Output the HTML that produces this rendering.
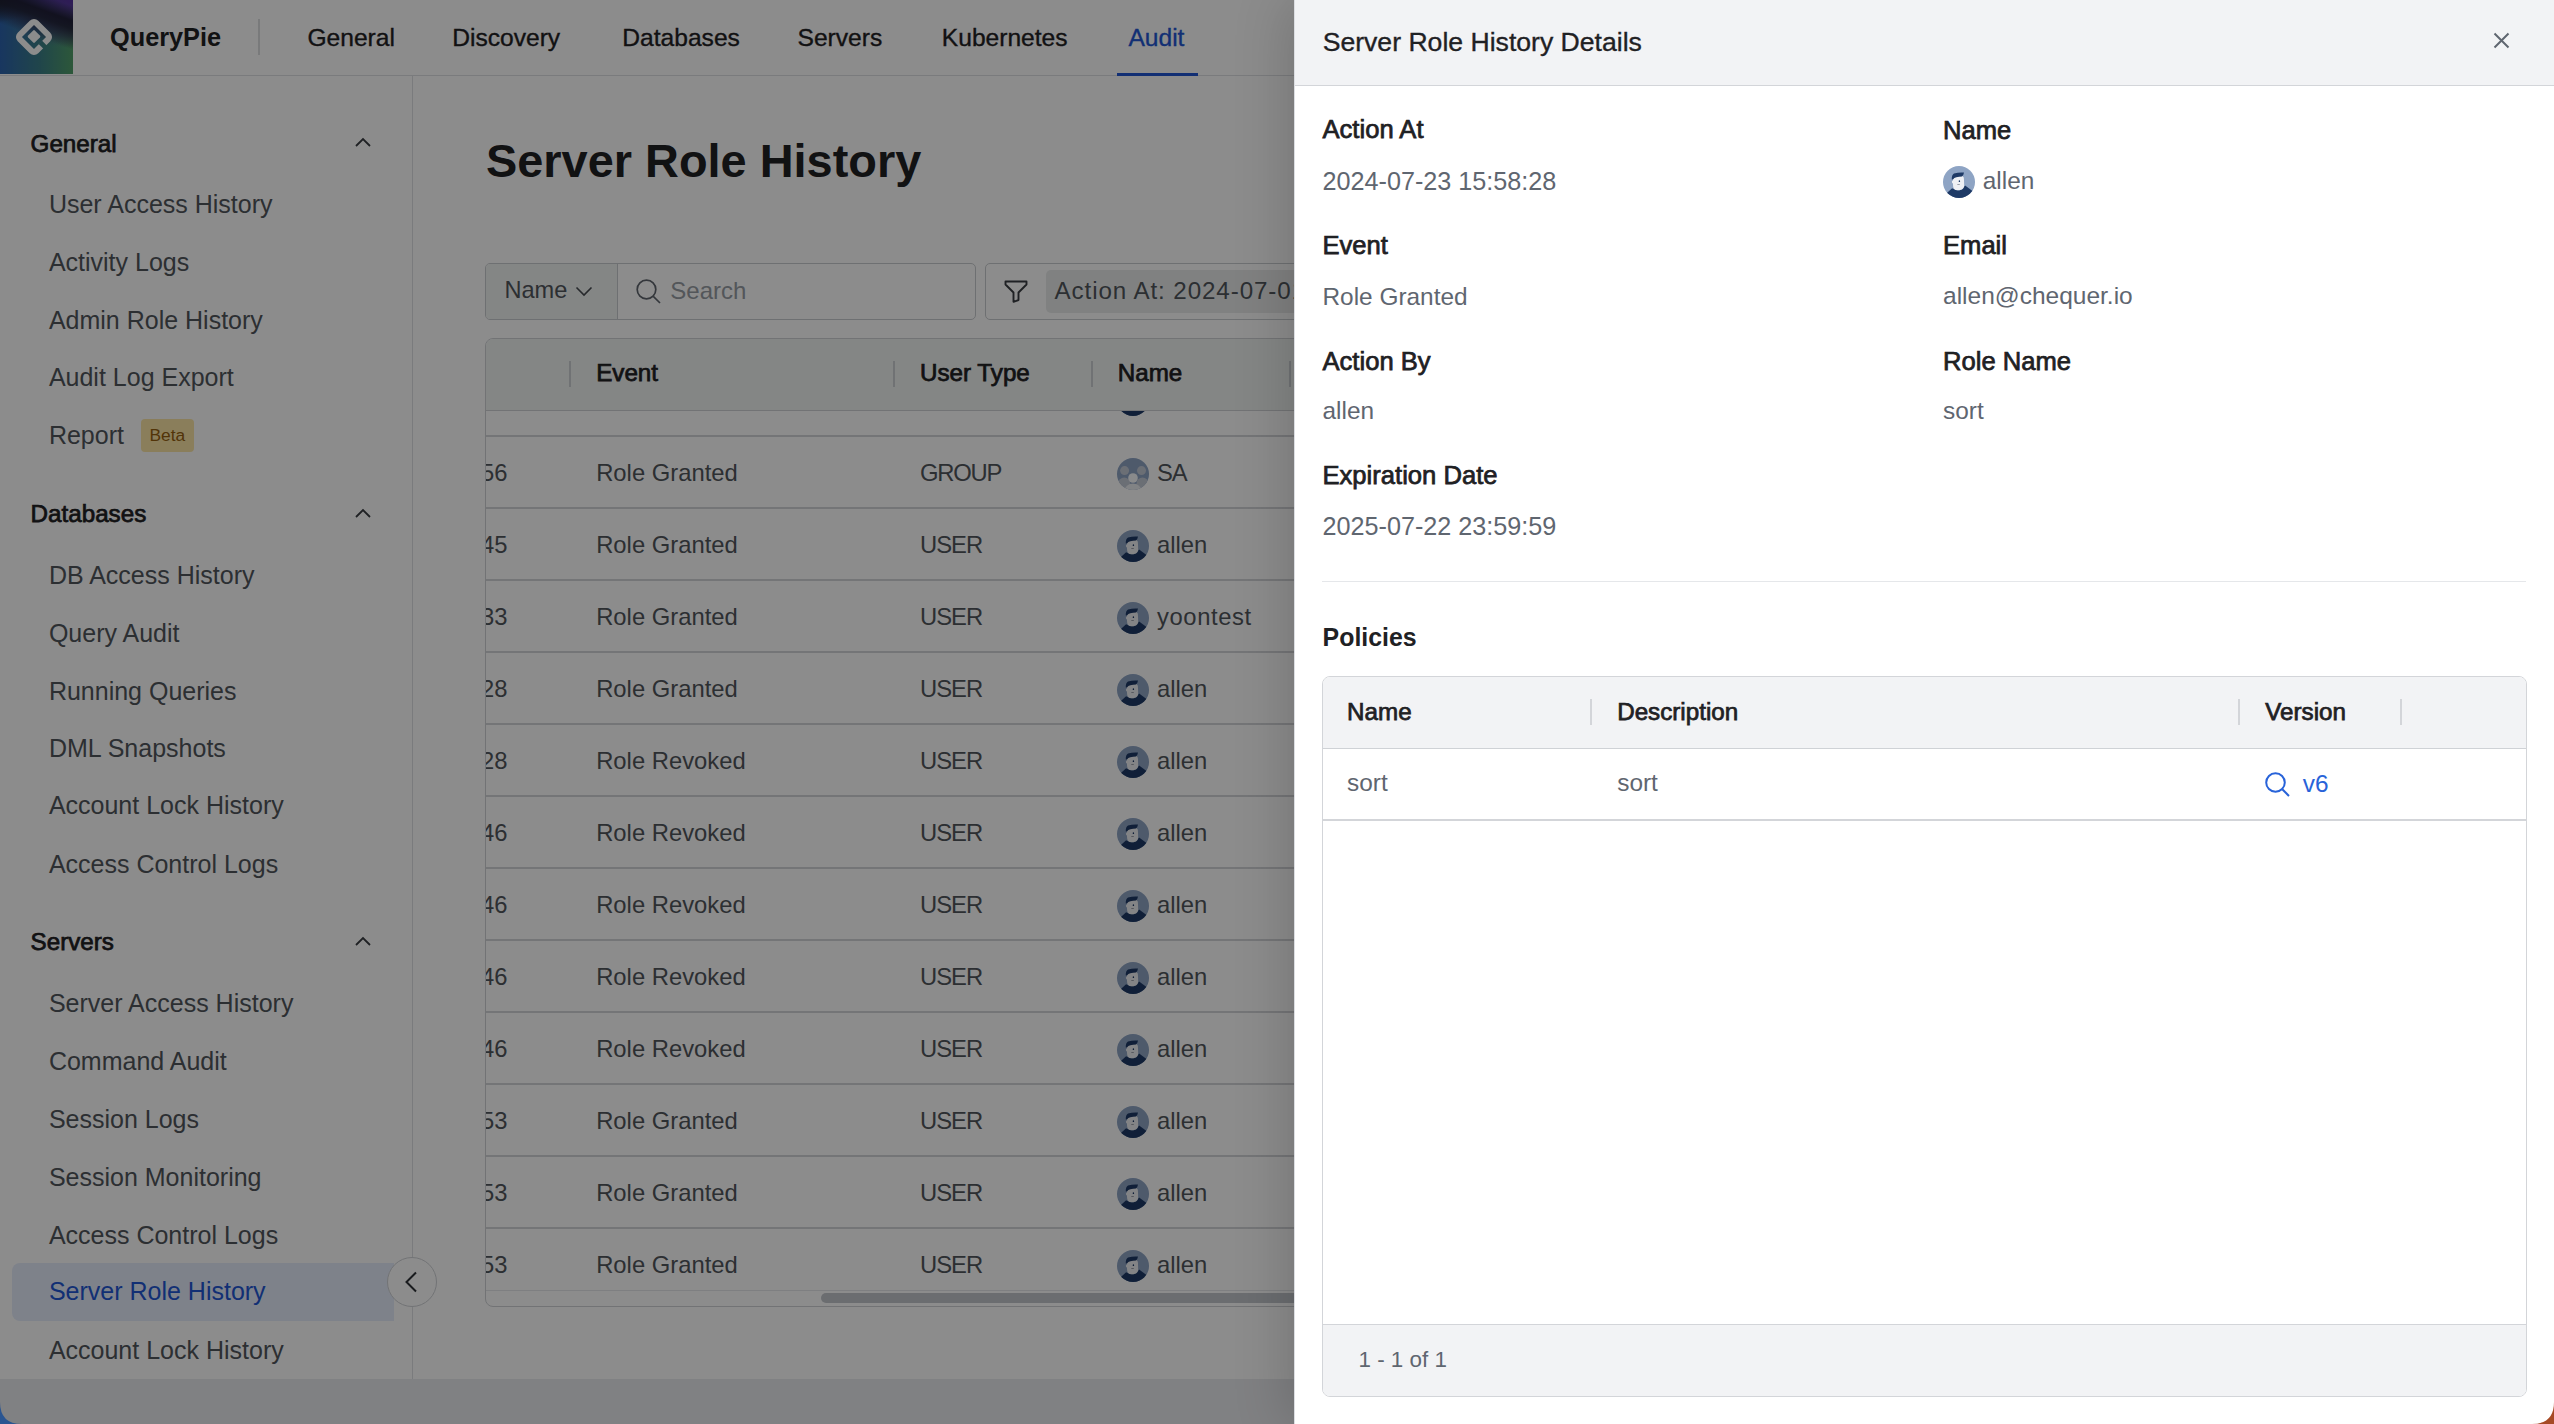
<!DOCTYPE html>
<html><head><meta charset="utf-8">
<style>
*{margin:0;padding:0;box-sizing:border-box}
html,body{width:2554px;height:1424px;overflow:hidden;background:#fff;font-family:"Liberation Sans",sans-serif}
.a{position:absolute}
.t{position:absolute;white-space:nowrap;line-height:1}
svg{position:absolute;overflow:visible}
.md{-webkit-text-stroke:0.35px currentColor}
.sb{-webkit-text-stroke:0.75px currentColor}
.c1{color:#1f2124}
.c2{color:#51565c}
.c3{color:#5f6670}
.bl{color:#2257d4}
</style></head><body>
<svg width="0" height="0" style="position:absolute">
<defs>
<clipPath id="cc"><circle cx="16" cy="16" r="16"/></clipPath>
<symbol id="av" viewBox="0 0 32 32">
<g clip-path="url(#cc)">
<rect width="32" height="32" fill="#8ea4c4"/>
<path d="M3.9 26.9 L9.1 22.3 Q13 24.5 16.5 24.5 Q20 23 22.1 19.5 L29.2 24.8 L32 32 L0 32 Z" fill="#1e3a66"/>
<path d="M9.7 13 Q9.5 11 11 10.5 L19.5 10 Q21.3 11 21 14 L21.2 20 Q21 22 19 23.5 Q16 24.5 12.5 24 Q10.5 23 10.2 21 L9.9 17.5 Q8.7 17 8.9 15.5 Q9.2 14.6 9.8 14.7 Z" fill="#eef0f4"/>
<path d="M8.8 13.6 Q8.5 9 11 7.5 Q16 6 21 6.5 Q20.5 9.5 19 10.6 Q16 11 13.4 11.2 Q11 11.6 10 13.6 Z" fill="#1e3a66"/>
<ellipse cx="16.4" cy="15.2" rx="0.7" ry="0.9" fill="#1e3a66"/>
<rect x="14.3" y="18.2" width="2.5" height="0.8" fill="#8a8f99"/>
</g>
</symbol>
<symbol id="gav" viewBox="0 0 32 32">
<g clip-path="url(#cc)">
<rect width="32" height="32" fill="#8ea4c4"/>
<circle cx="7.2" cy="25.5" r="6" fill="#c4cad6"/>
<circle cx="25.5" cy="25.5" r="6" fill="#c4cad6"/>
<circle cx="7.6" cy="12.6" r="4.5" fill="#c4cad6"/>
<circle cx="24.5" cy="12.6" r="4.5" fill="#c4cad6"/>
<ellipse cx="16" cy="33" rx="8.5" ry="7.5" fill="#eceef3"/>
<circle cx="16" cy="20" r="4.8" fill="#fafbfd"/>
</g>
</symbol>
</defs></svg>
<div class="a" style="left:0;top:0;width:2554px;height:1424px;overflow:hidden;background:#fff">
<div class="a" style="left:0px;top:0px;width:73px;height:74px;background:linear-gradient(200deg,rgba(30,30,50,0) 6%,rgba(30,30,52,0.95) 21%,rgba(30,32,48,0.85) 29%,rgba(30,40,50,0) 50%),radial-gradient(75px 48px at 100% 0%,#55309f 0%,rgba(85,48,159,0.75) 40%,rgba(85,48,159,0) 100%),linear-gradient(165deg,#1f2233 0%,rgba(31,34,51,0) 25%),linear-gradient(90deg,#2d63ae 0%,#3b7f88 55%,#52a06a 100%);"></div>
<svg style="left:0;top:0" width="73" height="74" viewBox="0 0 73 74">
<defs><mask id="lg"><rect width="73" height="74" fill="#fff"/><rect x="-7" y="-2.3" width="14" height="4.6" fill="#000" transform="translate(45.2 47.2) rotate(45)"/></mask></defs>
<g mask="url(#lg)"><rect x="-11.5" y="-11.5" width="23" height="23" rx="3" fill="none" stroke="#fff" stroke-width="6" transform="translate(34 37) rotate(45)"/></g>
<rect x="-4.9" y="-4.9" width="9.8" height="9.8" rx="1.5" fill="#fff" transform="translate(34 36.5) rotate(45)"/>
</svg>
<div class="t c1" style="left:110.0px;top:24.8px;font-size:25.3px;font-weight:bold;">QueryPie</div>
<div class="a" style="left:258px;top:19px;width:2px;height:36px;background:#dcdee1"></div>
<div class="t c1 md" style="left:307.4px;top:26.3px;font-size:24.6px;">General</div>
<div class="t c1 md" style="left:452.2px;top:26.3px;font-size:24.6px;">Discovery</div>
<div class="t c1 md" style="left:622.3px;top:26.3px;font-size:24.6px;">Databases</div>
<div class="t c1 md" style="left:797.5px;top:26.3px;font-size:24.6px;">Servers</div>
<div class="t c1 md" style="left:941.8px;top:26.3px;font-size:24.6px;">Kubernetes</div>
<div class="t bl md" style="left:1128.4px;top:26.3px;font-size:24.6px;">Audit</div>
<div class="a" style="left:0px;top:75px;width:2554px;height:1px;background:#dfe1e4"></div>
<div class="a" style="left:1117px;top:73px;width:81px;height:3px;background:#2257d4"></div>
<div class="a" style="left:412px;top:76px;width:1px;height:1303px;background:#dfe1e4"></div>
<div class="t c1 sb" style="left:30.6px;top:131.5px;font-size:24.2px;">General</div>
<svg style="left:355px;top:138px" width="16" height="9" viewBox="0 0 16 9"><path d="M1 8 L8 1 L15 8" fill="none" stroke="#3a3d42" stroke-width="1.8"/></svg>
<div class="t c2" style="left:48.9px;top:192.2px;font-size:25px;">User Access History</div>
<div class="t c2" style="left:48.9px;top:249.9px;font-size:25px;">Activity Logs</div>
<div class="t c2" style="left:48.9px;top:307.6px;font-size:25px;">Admin Role History</div>
<div class="t c2" style="left:48.9px;top:365.2px;font-size:25px;">Audit Log Export</div>
<div class="t c2" style="left:48.9px;top:422.9px;font-size:25px;">Report</div>
<div class="a" style="left:141px;top:419px;width:53px;height:33px;background:#fbe6a6;border-radius:4px"></div>
<div class="t " style="left:149.5px;top:427.0px;font-size:17.4px;color:#95600f">Beta</div>
<div class="t c1 sb" style="left:30.6px;top:502.3px;font-size:24.2px;">Databases</div>
<svg style="left:355px;top:509px" width="16" height="9" viewBox="0 0 16 9"><path d="M1 8 L8 1 L15 8" fill="none" stroke="#3a3d42" stroke-width="1.8"/></svg>
<div class="t c2" style="left:48.9px;top:563.0px;font-size:25px;">DB Access History</div>
<div class="t c2" style="left:48.9px;top:621.2px;font-size:25px;">Query Audit</div>
<div class="t c2" style="left:48.9px;top:678.8px;font-size:25px;">Running Queries</div>
<div class="t c2" style="left:48.9px;top:735.8px;font-size:25px;">DML Snapshots</div>
<div class="t c2" style="left:48.9px;top:793.1px;font-size:25px;">Account Lock History</div>
<div class="t c2" style="left:48.9px;top:851.5px;font-size:25px;">Access Control Logs</div>
<div class="t c1 sb" style="left:30.6px;top:930.4px;font-size:24.2px;">Servers</div>
<svg style="left:355px;top:937px" width="16" height="9" viewBox="0 0 16 9"><path d="M1 8 L8 1 L15 8" fill="none" stroke="#3a3d42" stroke-width="1.8"/></svg>
<div class="a" style="left:12px;top:1263px;width:382px;height:58px;background:#e6edfc;border-radius:8px 0 0 8px"></div>
<div class="t c2" style="left:48.9px;top:991.2px;font-size:25px;">Server Access History</div>
<div class="t c2" style="left:48.9px;top:1048.8px;font-size:25px;">Command Audit</div>
<div class="t c2" style="left:48.9px;top:1107.1px;font-size:25px;">Session Logs</div>
<div class="t c2" style="left:48.9px;top:1164.5px;font-size:25px;">Session Monitoring</div>
<div class="t c2" style="left:48.9px;top:1222.5px;font-size:25px;">Access Control Logs</div>
<div class="t bl" style="left:48.9px;top:1278.8px;font-size:25px;">Server Role History</div>
<div class="t c2" style="left:48.9px;top:1338.2px;font-size:25px;">Account Lock History</div>
<div class="a" style="left:387px;top:1257px;width:50px;height:50px;background:#fff;border:1px solid #cfd2d6;border-radius:50%"></div>
<svg style="left:404px;top:1271px" width="14" height="22" viewBox="0 0 14 22"><path d="M12 1.5 L2.5 11 L12 20.5" fill="none" stroke="#2f3237" stroke-width="2"/></svg>
<div class="t c1" style="left:486.0px;top:138.1px;font-size:46.9px;font-weight:bold;">Server Role History</div>
<div class="a" style="left:485px;top:263px;width:491px;height:57px;border:1px solid #c9ccd0;border-radius:5px;background:#fff"></div>
<div class="a" style="left:486px;top:264px;width:131px;height:55px;background:#f1f4f3;border-radius:4px 0 0 4px"></div>
<div class="a" style="left:617px;top:264px;width:1px;height:55px;background:#c9ccd0"></div>
<div class="t c2" style="left:504.4px;top:279.2px;font-size:23.6px;">Name</div>
<svg style="left:575px;top:286px" width="18" height="11" viewBox="0 0 18 11"><path d="M1.5 1.5 L9 9 L16.5 1.5" fill="none" stroke="#474b51" stroke-width="1.6"/></svg>
<svg style="left:636px;top:279px" width="25" height="25" viewBox="0 0 25 25"><circle cx="10.5" cy="10.5" r="9.3" fill="none" stroke="#5f656d" stroke-width="1.7"/><path d="M17.3 17.3 L24 24" stroke="#5f656d" stroke-width="1.7"/></svg>
<div class="t " style="left:670.3px;top:278.9px;font-size:24px;color:#979da4">Search</div>
<div class="a" style="left:985px;top:263px;width:600px;height:57px;border:1px solid #c9ccd0;border-radius:5px;background:#fff"></div>
<svg style="left:1004px;top:280px" width="24" height="23" viewBox="0 0 24 23"><path d="M1.5 1.5 H22.5 V4.5 L14.5 12.5 V20 L9.5 21.8 V12.5 L1.5 4.5 Z" fill="none" stroke="#3a3d42" stroke-width="1.9" stroke-linejoin="round"/></svg>
<div class="a" style="left:1046px;top:270px;width:400px;height:43px;background:#e9ecec;border-radius:5px"></div>
<div class="t c2" style="left:1054.5px;top:279.3px;font-size:24.2px;letter-spacing:0.9px">Action At: 2024-07-01 ~ 2024-07-31</div>
<div class="a" style="left:485px;top:338px;width:1000px;height:969px;border:1px solid #cfd2d6;border-radius:8px;background:#fff;overflow:hidden"></div>
<div class="a" style="left:486px;top:339px;width:999px;height:71px;background:#f1f4f3;border-radius:7px 0 0 0"></div>
<div class="a" style="left:486px;top:410px;width:999px;height:1px;background:#cfd2d6"></div>
<div class="a" style="left:569px;top:361px;width:2px;height:26px;background:#cdd0d4"></div>
<div class="a" style="left:893px;top:361px;width:2px;height:26px;background:#cdd0d4"></div>
<div class="a" style="left:1091px;top:361px;width:2px;height:26px;background:#cdd0d4"></div>
<div class="a" style="left:1289px;top:361px;width:2px;height:26px;background:#cdd0d4"></div>
<div class="t c1 sb" style="left:596.2px;top:361.4px;font-size:24.2px;">Event</div>
<div class="t c1 sb" style="left:920.0px;top:361.4px;font-size:24.2px;">User Type</div>
<div class="t c1 sb" style="left:1117.8px;top:361.4px;font-size:24.2px;">Name</div>
<div class="a" style="left:486px;top:411px;width:999px;height:880px;overflow:hidden">
<svg style="left:631px;top:-27px" width="32" height="32"><use href="#av"/></svg>
<div class="a" style="left:0px;top:24px;width:999px;height:2px;background:#d3d5d9"></div>
<div class="t c2" style="right:977.5px;top:49.8px;font-size:23.8px">2024-07-23 15:49:56</div>
<div class="t c2" style="left:110.2px;top:49.8px;font-size:23.8px;">Role Granted</div>
<div class="t c2" style="left:434.0px;top:49.8px;font-size:23.8px;letter-spacing:-1.2px">GROUP</div>
<svg style="left:631px;top:46.5px" width="32" height="32"><use href="#gav"/></svg>
<div class="t c2" style="left:671.0px;top:49.8px;font-size:23.8px;letter-spacing:-1px">SA</div>
<div class="a" style="left:0px;top:96px;width:999px;height:2px;background:#d3d5d9"></div>
<div class="t c2" style="right:977.5px;top:121.8px;font-size:23.8px">2024-07-23 15:45:45</div>
<div class="t c2" style="left:110.2px;top:121.8px;font-size:23.8px;">Role Granted</div>
<div class="t c2" style="left:434.0px;top:121.8px;font-size:23.8px;letter-spacing:-1px">USER</div>
<svg style="left:631px;top:118.5px" width="32" height="32"><use href="#av"/></svg>
<div class="t c2" style="left:671.0px;top:121.8px;font-size:23.8px;">allen</div>
<div class="a" style="left:0px;top:168px;width:999px;height:2px;background:#d3d5d9"></div>
<div class="t c2" style="right:977.5px;top:193.8px;font-size:23.8px">2024-07-23 15:40:33</div>
<div class="t c2" style="left:110.2px;top:193.8px;font-size:23.8px;">Role Granted</div>
<div class="t c2" style="left:434.0px;top:193.8px;font-size:23.8px;letter-spacing:-1px">USER</div>
<svg style="left:631px;top:190.5px" width="32" height="32"><use href="#av"/></svg>
<div class="t c2" style="left:671.0px;top:193.8px;font-size:23.8px;letter-spacing:0.6px">yoontest</div>
<div class="a" style="left:0px;top:240px;width:999px;height:2px;background:#d3d5d9"></div>
<div class="t c2" style="right:977.5px;top:265.8px;font-size:23.8px">2024-07-23 15:38:28</div>
<div class="t c2" style="left:110.2px;top:265.8px;font-size:23.8px;">Role Granted</div>
<div class="t c2" style="left:434.0px;top:265.8px;font-size:23.8px;letter-spacing:-1px">USER</div>
<svg style="left:631px;top:262.5px" width="32" height="32"><use href="#av"/></svg>
<div class="t c2" style="left:671.0px;top:265.8px;font-size:23.8px;">allen</div>
<div class="a" style="left:0px;top:312px;width:999px;height:2px;background:#d3d5d9"></div>
<div class="t c2" style="right:977.5px;top:337.8px;font-size:23.8px">2024-07-23 15:37:28</div>
<div class="t c2" style="left:110.2px;top:337.8px;font-size:23.8px;">Role Revoked</div>
<div class="t c2" style="left:434.0px;top:337.8px;font-size:23.8px;letter-spacing:-1px">USER</div>
<svg style="left:631px;top:334.5px" width="32" height="32"><use href="#av"/></svg>
<div class="t c2" style="left:671.0px;top:337.8px;font-size:23.8px;">allen</div>
<div class="a" style="left:0px;top:384px;width:999px;height:2px;background:#d3d5d9"></div>
<div class="t c2" style="right:977.5px;top:409.8px;font-size:23.8px">2024-07-23 15:36:46</div>
<div class="t c2" style="left:110.2px;top:409.8px;font-size:23.8px;">Role Revoked</div>
<div class="t c2" style="left:434.0px;top:409.8px;font-size:23.8px;letter-spacing:-1px">USER</div>
<svg style="left:631px;top:406.5px" width="32" height="32"><use href="#av"/></svg>
<div class="t c2" style="left:671.0px;top:409.8px;font-size:23.8px;">allen</div>
<div class="a" style="left:0px;top:456px;width:999px;height:2px;background:#d3d5d9"></div>
<div class="t c2" style="right:977.5px;top:481.8px;font-size:23.8px">2024-07-23 15:35:46</div>
<div class="t c2" style="left:110.2px;top:481.8px;font-size:23.8px;">Role Revoked</div>
<div class="t c2" style="left:434.0px;top:481.8px;font-size:23.8px;letter-spacing:-1px">USER</div>
<svg style="left:631px;top:478.5px" width="32" height="32"><use href="#av"/></svg>
<div class="t c2" style="left:671.0px;top:481.8px;font-size:23.8px;">allen</div>
<div class="a" style="left:0px;top:528px;width:999px;height:2px;background:#d3d5d9"></div>
<div class="t c2" style="right:977.5px;top:553.8px;font-size:23.8px">2024-07-23 15:34:46</div>
<div class="t c2" style="left:110.2px;top:553.8px;font-size:23.8px;">Role Revoked</div>
<div class="t c2" style="left:434.0px;top:553.8px;font-size:23.8px;letter-spacing:-1px">USER</div>
<svg style="left:631px;top:550.5px" width="32" height="32"><use href="#av"/></svg>
<div class="t c2" style="left:671.0px;top:553.8px;font-size:23.8px;">allen</div>
<div class="a" style="left:0px;top:600px;width:999px;height:2px;background:#d3d5d9"></div>
<div class="t c2" style="right:977.5px;top:625.8px;font-size:23.8px">2024-07-23 15:33:46</div>
<div class="t c2" style="left:110.2px;top:625.8px;font-size:23.8px;">Role Revoked</div>
<div class="t c2" style="left:434.0px;top:625.8px;font-size:23.8px;letter-spacing:-1px">USER</div>
<svg style="left:631px;top:622.5px" width="32" height="32"><use href="#av"/></svg>
<div class="t c2" style="left:671.0px;top:625.8px;font-size:23.8px;">allen</div>
<div class="a" style="left:0px;top:672px;width:999px;height:2px;background:#d3d5d9"></div>
<div class="t c2" style="right:977.5px;top:697.8px;font-size:23.8px">2024-07-23 15:30:53</div>
<div class="t c2" style="left:110.2px;top:697.8px;font-size:23.8px;">Role Granted</div>
<div class="t c2" style="left:434.0px;top:697.8px;font-size:23.8px;letter-spacing:-1px">USER</div>
<svg style="left:631px;top:694.5px" width="32" height="32"><use href="#av"/></svg>
<div class="t c2" style="left:671.0px;top:697.8px;font-size:23.8px;">allen</div>
<div class="a" style="left:0px;top:744px;width:999px;height:2px;background:#d3d5d9"></div>
<div class="t c2" style="right:977.5px;top:769.8px;font-size:23.8px">2024-07-23 15:29:53</div>
<div class="t c2" style="left:110.2px;top:769.8px;font-size:23.8px;">Role Granted</div>
<div class="t c2" style="left:434.0px;top:769.8px;font-size:23.8px;letter-spacing:-1px">USER</div>
<svg style="left:631px;top:766.5px" width="32" height="32"><use href="#av"/></svg>
<div class="t c2" style="left:671.0px;top:769.8px;font-size:23.8px;">allen</div>
<div class="a" style="left:0px;top:816px;width:999px;height:2px;background:#d3d5d9"></div>
<div class="t c2" style="right:977.5px;top:841.8px;font-size:23.8px">2024-07-23 15:28:53</div>
<div class="t c2" style="left:110.2px;top:841.8px;font-size:23.8px;">Role Granted</div>
<div class="t c2" style="left:434.0px;top:841.8px;font-size:23.8px;letter-spacing:-1px">USER</div>
<svg style="left:631px;top:838.5px" width="32" height="32"><use href="#av"/></svg>
<div class="t c2" style="left:671.0px;top:841.8px;font-size:23.8px;">allen</div>
<div class="a" style="left:0px;top:888px;width:999px;height:2px;background:#d3d5d9"></div>
</div>
<div class="a" style="left:486px;top:1290px;width:999px;height:1px;background:#e6e8eb"></div>
<div class="a" style="left:821px;top:1293px;width:600px;height:10px;background:#c3c7cc;border-radius:5px"></div>
<div class="a" style="left:0px;top:1379px;width:2554px;height:45px;background:#e9ebef"></div>
</div>
<div class="a" style="left:0px;top:0px;width:2554px;height:1424px;background:rgba(0,0,0,0.45)"></div>
<div class="a" style="left:1294px;top:0px;width:1260px;height:1424px;background:#fff;box-shadow:-8px 0 50px rgba(0,0,0,0.16)"></div>
<div class="a" style="left:1294px;top:0px;width:1px;height:1424px;background:#dcdee2"></div>
<div class="a" style="left:1295px;top:0px;width:1259px;height:85px;background:#f2f3f5"></div>
<div class="a" style="left:1295px;top:85px;width:1259px;height:1px;background:#d3d5d9"></div>
<div class="t c1 md" style="left:1322.7px;top:28.6px;font-size:26.6px;">Server Role History Details</div>
<svg style="left:2493px;top:32px" width="17" height="17" viewBox="0 0 17 17"><path d="M1.5 1.5 L15.5 15.5 M15.5 1.5 L1.5 15.5" stroke="#5f6670" stroke-width="2"/></svg>
<div class="t c1 sb" style="left:1322.5px;top:117.2px;font-size:25.6px;">Action At</div>
<div class="t c3" style="left:1322.5px;top:168.6px;font-size:25.2px;">2024-07-23 15:58:28</div>
<div class="t c1 sb" style="left:1322.5px;top:233.3px;font-size:25.6px;">Event</div>
<div class="t c3" style="left:1322.5px;top:284.6px;font-size:24.4px;">Role Granted</div>
<div class="t c1 sb" style="left:1322.5px;top:348.7px;font-size:25.6px;">Action By</div>
<div class="t c3" style="left:1322.5px;top:399.1px;font-size:24.4px;">allen</div>
<div class="t c1 sb" style="left:1322.5px;top:463.0px;font-size:25.6px;">Expiration Date</div>
<div class="t c3" style="left:1322.5px;top:513.5px;font-size:25.2px;">2025-07-22 23:59:59</div>
<div class="t c1 sb" style="left:1943.0px;top:117.8px;font-size:25.6px;">Name</div>
<svg style="left:1943px;top:166px" width="32" height="32"><use href="#av"/></svg>
<div class="t c3" style="left:1982.8px;top:169.2px;font-size:24.4px;">allen</div>
<div class="t c1 sb" style="left:1943.0px;top:233.0px;font-size:25.6px;">Email</div>
<div class="t c3" style="left:1943.0px;top:283.9px;font-size:24.5px;">allen@chequer.io</div>
<div class="t c1 sb" style="left:1943.0px;top:348.7px;font-size:25.6px;">Role Name</div>
<div class="t c3" style="left:1943.0px;top:399.1px;font-size:24.4px;">sort</div>
<div class="a" style="left:1322px;top:581px;width:1204px;height:1px;background:#e5e7ea"></div>
<div class="t c1" style="left:1322.6px;top:624.9px;font-size:24.9px;font-weight:bold;">Policies</div>
<div class="a" style="left:1322px;top:676px;width:1205px;height:721px;border:1px solid #d3d5d9;border-radius:8px;background:#fff;overflow:hidden"></div>
<div class="a" style="left:1323px;top:677px;width:1203px;height:71px;background:#f2f3f5;border-radius:7px 7px 0 0"></div>
<div class="a" style="left:1323px;top:748px;width:1203px;height:1px;background:#cfd2d6"></div>
<div class="a" style="left:1590px;top:699px;width:2px;height:26px;background:#d3d5d9"></div>
<div class="a" style="left:2238px;top:699px;width:2px;height:26px;background:#d3d5d9"></div>
<div class="a" style="left:2400px;top:699px;width:2px;height:26px;background:#d3d5d9"></div>
<div class="t c1 sb" style="left:1347.1px;top:699.6px;font-size:24.2px;">Name</div>
<div class="t c1 sb" style="left:1617.2px;top:699.6px;font-size:24.2px;">Description</div>
<div class="t c1 sb" style="left:2265.3px;top:699.6px;font-size:24.2px;">Version</div>
<div class="t c3" style="left:1347.1px;top:770.8px;font-size:24.4px;">sort</div>
<div class="t c3" style="left:1617.2px;top:770.8px;font-size:24.4px;">sort</div>
<svg style="left:2265px;top:772px" width="25" height="25" viewBox="0 0 25 25"><circle cx="10.5" cy="10.5" r="9.3" fill="none" stroke="#2863d9" stroke-width="2"/><path d="M17.3 17.3 L24 24" stroke="#2863d9" stroke-width="2"/></svg>
<div class="t " style="left:2302.8px;top:772.1px;font-size:24.4px;color:#2863d9">v6</div>
<div class="a" style="left:1323px;top:819px;width:1203px;height:2px;background:#d3d5d9"></div>
<div class="a" style="left:1323px;top:1324px;width:1203px;height:1px;background:#d3d5d9"></div>
<div class="a" style="left:1323px;top:1325px;width:1203px;height:71px;background:#f2f3f5;border-radius:0 0 7px 7px"></div>
<div class="t c3" style="left:1358.5px;top:1349.0px;font-size:22.4px;">1 - 1 of 1</div>
<svg style="left:2532px;top:1402px" width="22" height="22" viewBox="0 0 22 22"><path d="M22 0 V22 H0 Q22 22 22 0 Z" fill="#a64a25"/></svg>
<svg style="left:0;top:1402px" width="22" height="22" viewBox="0 0 22 22"><path d="M0 0 V22 H22 Q0 22 0 0 Z" fill="#2a5591"/></svg>
</body></html>
